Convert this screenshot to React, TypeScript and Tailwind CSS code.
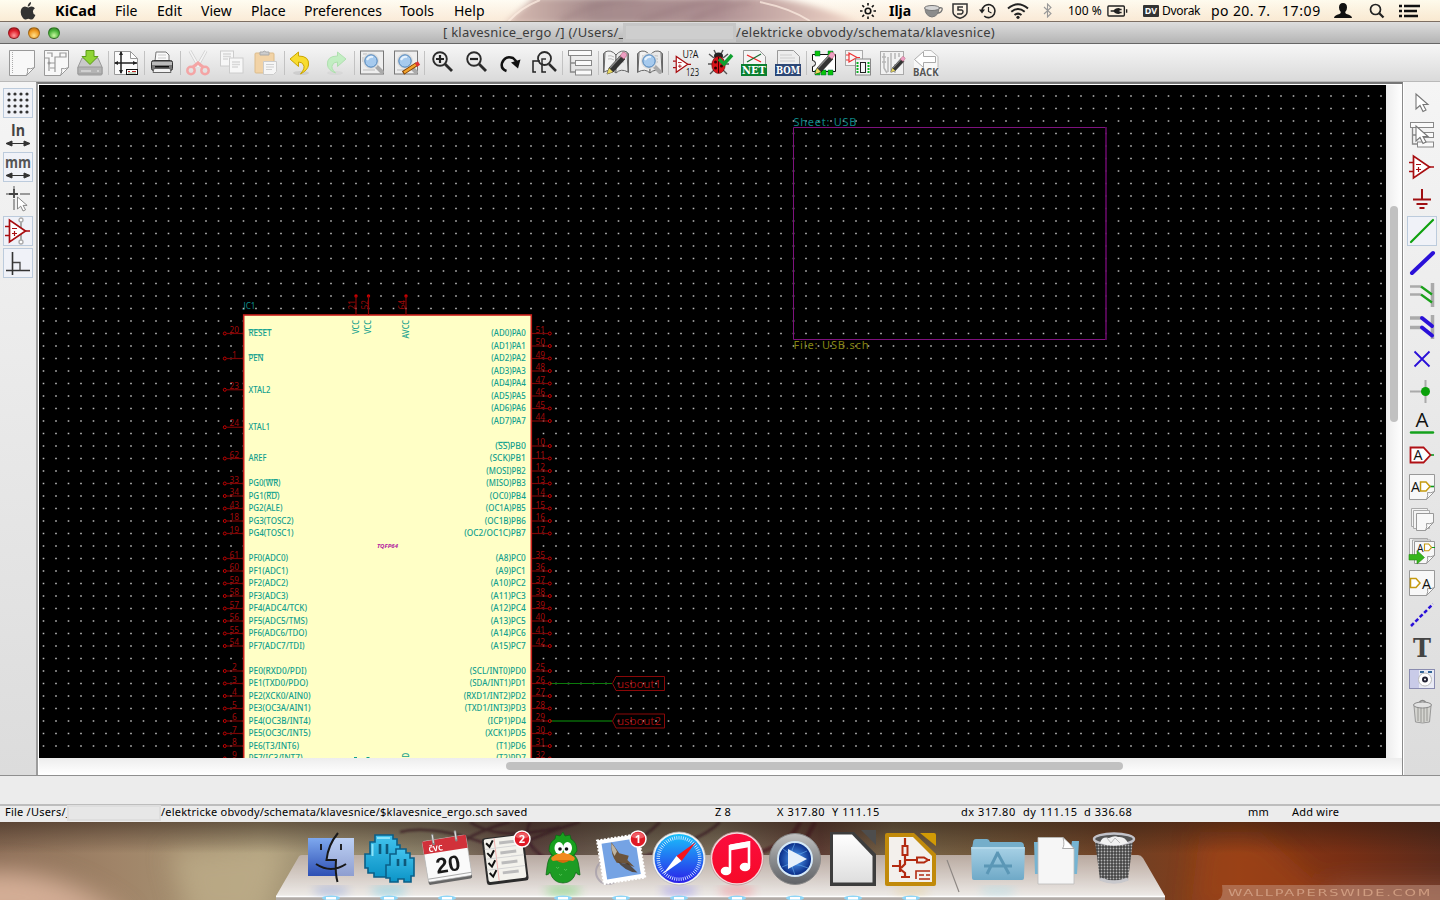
import React from "react";

type P = { children?: React.ReactNode };

const Ico = ({ children, s = 26 }: P & { s?: number }) => (
  <svg width={s} height={s} viewBox="0 0 26 26" fill="none" className="block shrink-0 overflow-visible">
    {children}
  </svg>
);

/* ---------- shared icon pieces ---------- */
const Page = ({ x = 0, y = 0, w = 25, h = 25, o = 1 }: { x?: number; y?: number; w?: number; h?: number; o?: number }) => (
  <g opacity={o}>
    <path d={`M${x + 0.5} ${y + 0.5}h${w}v${h - 8}l-8 8h${-(w - 8)}z`} fill="#f8f8f8" stroke="#999" />
    <path d={`M${x + w + 0.5} ${y + h - 7.5}q-4 2 -7 1q1 3 -1 7z`} fill="#fff" stroke="#999" />
  </g>
);
const Pencil = () => (
  <g>
    <path d="M4 24l2-6 12-13 4 4-12 13z" fill="#333" stroke="#111" strokeWidth=".6" />
    <path d="M7 18L18 6" stroke="#888" strokeWidth="1.4" />
    <path d="M4 24l2-6 4 4z" fill="#e8d860" />
    <path d="M17 6l3-4q3 0 4 3l-3 4z" fill="#ee9fc4" stroke="#a56" strokeWidth=".5" />
  </g>
);
const Glass = () => (
  <g>
    <path d="M17 16l6 6" stroke="#aaa" strokeWidth="4" strokeLinecap="round" />
    <circle cx="12" cy="11" r="7" fill="#a9cdf0" stroke="#ddd" strokeWidth="2" />
    <circle cx="12" cy="11" r="6.2" fill="#a6caee" stroke="#4c82b8" />
    <path d="M8 10q2-4 6-3" stroke="#e6f2fd" strokeWidth="2" />
  </g>
);
const Book = () => (
  <g stroke="#666" strokeWidth="1">
    <path d="M0.500 3.500l2-1v17l-2 3zM25.500 3.500l-2-1v17l2 3z" fill="#ddd" />
    <path d="M2 2q6-3 11 3v18q-5-5-12-1z" fill="#f2f2f2" />
    <path d="M24 2q-6-3-11 3v18q5-5 12-1z" fill="#e9e9e9" />
    <path d="M5 6q3-1 6 1M5 9q3-1 6 1M15 7q3-2 6-1M15 10q3-2 6-1M15 13q3-2 6-1" stroke="#bbb" />
  </g>
);
const OpAmp = () => (
  <g stroke="#a80d10" strokeWidth="1.700">
    <path d="M4.500 2v22l16-11z" fill="#fff" />
    <path d="M0 8.500h4M0 17.500h4M20 13h5" />
    <path d="M7 10.500h5M7 15.500h5M9.500 13v5" strokeWidth="1.200" />
  </g>
);
const Cursor = ({ x = 0, y = 0 }) => (
  <path transform={`translate(${x} ${y})`} d="M0 0v15l4-3.500 3 6 3-1.500-3-5.500h5z" fill="#fff" stroke="#777" strokeWidth="1.100" />
);
const Tree = () => (
  <g stroke="#888" fill="#fafafa">
    <path d="M3.500 5v17h6M3.500 13h6" strokeWidth="1.300" fill="none" />
    <rect x="1.500" y="0.500" width="23" height="5" />
    <rect x="8.500" y="10.500" width="16" height="5" />
    <rect x="8.500" y="20" width="16" height="5" />
  </g>
);
const T = ({ x, y, s, f = "#111", b = false, children, l, serif = false }: P & { x: number; y: number; s: number; f?: string; b?: boolean; l?: number; serif?: boolean }) => (
  <text x={x} y={y} fontSize={s} fill={f} fontWeight={b ? 700 : 400} textLength={l} lengthAdjust="spacingAndGlyphs" fontFamily={serif ? "DejaVu Serif, serif" : "Open Sans, sans-serif"}>
    {children}
  </text>
);

/* ---------- top toolbar ---------- */
const topGroups: React.ReactNode[][] = [
  [
    <Ico><Page /><path d="M3.500 2v22" stroke="#aaa" strokeDasharray="1 1" /></Ico>,
    <Ico><Page x={1} w={24} /><path d="M1 8h5v5h6v-6h5M4 3h5v4M12 13v9M7 18h5M17 3h6v4h-6zM6 13v8" stroke="#999" strokeWidth="1.200" /><circle cx="6" cy="13" r="1.500" fill="#999" /></Ico>,
    <Ico>
      <path d="M5 8h16l4 9v7q0 1-1 1H2q-1 0-1-1v-7z" fill="#c9c9c9" stroke="#999" />
      <path d="M1 17h24v7H1z" fill="#b4b4b4" stroke="#999" /><path d="M4 21h10M20 21h2" stroke="#eee" />
      <path d="M9 0.500h8v6h4l-8 8-8-8h4z" fill="#8fd435" stroke="#5a9a17" />
    </Ico>,
  ],
  [
    <Ico>
      <path d="M1.500 1.500h16l7 7v16h-23z" fill="#fbfbfb" stroke="#999" /><path d="M17.500 1.500v7h7z" fill="#fff" stroke="#999" />
      <path d="M8 2v21M2 13h22" stroke="#222" strokeWidth="1.500" />
      <path d="M8 1l-2 4h4zM8 24l-2-4h4zM1 13l4-2v4zM24 13l-4-2v4z" fill="#222" />
      <rect x="13.500" y="19.500" width="11" height="5" fill="#fff" stroke="#111" /><path d="M15 21.500h2M19 21.500h4" stroke="#b22" /><path d="M15 23h8" stroke="#585" strokeWidth=".7" />
    </Ico>,
  ],
  [
    <Ico>
      <path d="M6 11l1-9h10l3 3v6" fill="#fafafa" stroke="#777" /><path d="M9 5h8M9 8h8" stroke="#ccc" />
      <rect x="2.500" y="10.500" width="21" height="10" rx="2" fill="#777" stroke="#333" /><path d="M3 12h20v3H3z" fill="#bbb" /><path d="M6 16h14v1.500H6z" fill="#111" />
      <path d="M5 18.500h16l1 4H4z" fill="#f2f2f2" stroke="#666" />
    </Ico>,
  ],
  [
    <Ico>
      <path d="M5 1l9 16M21 1l-9 16" stroke="#ccc" strokeWidth="3" /><path d="M5 1l9 16M21 1l-9 16" stroke="#f4f4f4" strokeWidth="1.600" />
      <circle cx="6" cy="20.500" r="3.700" stroke="#f4a5a5" strokeWidth="2.500" /><circle cx="20" cy="20.500" r="3.700" stroke="#f4a5a5" strokeWidth="2.500" /><path d="M8 17l5-4 5 4" stroke="#f4a5a5" strokeWidth="3" />
    </Ico>,
    <Ico>
      <g stroke="#ccc" fill="#f7f7f7"><rect x="1.500" y="1" width="13" height="15" /><rect x="10.500" y="8" width="13.500" height="15" /></g>
      <path d="M4 4h8M4 6.500h8M4 9h5M13 12h8M13 14.500h8M13 17h6" stroke="#d8d8d8" strokeWidth="1.400" />
    </Ico>,
    <Ico>
      <rect x="2" y="3" width="19" height="20" rx="1" fill="#f2d3a6" stroke="#dcbc8b" /><path d="M7 5V2h3q1-2 3 0h3v3z" fill="#ccc" stroke="#aaa" />
      <path d="M10.500 11.500h13v10l-3 3h-10z" fill="#f6f6f6" stroke="#ccc" /><path d="M13 14.500h8M13 17h8M13 19.500h6" stroke="#d0d0d0" />
    </Ico>,
  ],
  [
    <Ico><ellipse cx="12" cy="23" rx="8" ry="2" fill="#bbb" opacity=".5" /><path d="M1 9l8.500-7v4q11 0 10 9-.5 5-8 9 5-6 3-9-1-3-5-3v4.500z" fill="#f8dc2f" stroke="#caa500" /></Ico>,
    <Ico><g opacity=".8"><ellipse cx="12" cy="23" rx="8" ry="2" fill="#ccc" opacity=".5" /><path d="M23 9l-8.500-7v4q-11 0-10 9 .5 5 8 8-5-5-3-8 1-3 5-3v4.500z" fill="#b9efb9" stroke="#a0dda0" /></g></Ico>,
  ],
  [
    <Ico><rect x="1.500" y="1" width="23" height="23" fill="#eee" stroke="#777" /><path d="M4 4h4M4 20h12M4 7v5" stroke="#bbb" /><Glass /></Ico>,
    <Ico><rect x="1.500" y="1" width="23" height="23" fill="#eee" stroke="#777" /><path d="M4 20h12" stroke="#bbb" /><Glass /><path d="M10 23l14-9" stroke="#7c3d00" strokeWidth="4" /><path d="M11 22.500l12-8" stroke="#f2a32c" strokeWidth="2.500" /><path d="M23 15l3-2" stroke="#d33" strokeWidth="4" /></Ico>,
  ],
  [
    <Ico><circle cx="11" cy="9" r="6.800" stroke="#2b2b2b" strokeWidth="1.900" /><path d="M16 14l7 7" stroke="#2b2b2b" strokeWidth="2.800" /><path d="M7 9h8M11 5v8" stroke="#222" strokeWidth="2.200" /></Ico>,
    <Ico><circle cx="11" cy="9" r="6.800" stroke="#2b2b2b" strokeWidth="1.900" /><path d="M16 14l7 7" stroke="#2b2b2b" strokeWidth="2.800" /><path d="M7 9h8" stroke="#222" strokeWidth="2.200" /></Ico>,
    <Ico><path d="M9.500 21q-6-2-4.500-8 3-8 11-5 3 2 4 6" stroke="#111" strokeWidth="2.500" /><path d="M14 12.500l9.500-3-2.500 9z" fill="#111" /></Ico>,
    <Ico><path d="M5 22H2V11h7M11 13v9h4" stroke="#222" strokeWidth="1.500" /><circle cx="13.500" cy="8.500" r="6.500" stroke="#2b2b2b" strokeWidth="1.800" /><path d="M18 14l7 7" stroke="#2b2b2b" strokeWidth="2.500" /><path d="M11 14V9h4" stroke="#333" strokeWidth="1.500" /></Ico>,
  ],
  [<Ico><Tree /></Ico>],
  [<Ico><Book /><Pencil /></Ico>, <Ico><Book /><Glass /></Ico>],
  [
    <Ico><g transform="translate(0 5) scale(.72)"><OpAmp /></g><T x={9.500} y={8} s={10} l={16}>U?A</T><T x={13} y={25.500} s={10} l={13}>123</T></Ico>,
    <Ico>
      <path d="M7 8L2 4M6 14H1M8 19l-5 5M16 8l5-4M17 14h5M16 20l4 4M9 4L7 0M14 4l2-4" stroke="#555" strokeWidth="1.400" />
      <ellipse cx="11.500" cy="6" rx="4.500" ry="3.500" fill="#222" /><ellipse cx="11.500" cy="15" rx="6.700" ry="8.500" fill="#d9141b" stroke="#600" strokeWidth=".6" />
      <path d="M11.500 7v16" stroke="#400" /><g fill="#300"><circle cx="8.500" cy="12" r="1.500" /><circle cx="14.500" cy="16" r="1.500" /><circle cx="8.500" cy="18" r="1.500" /></g>
      <path d="M12 9l5 5 8-9" stroke="#10a030" strokeWidth="3.500" />
    </Ico>,
    <Ico><path d="M2.500.5h16l6 6v18h-22z" fill="#f4f4f4" stroke="#999" /><path d="M6 5l14 7" stroke="#e22" strokeWidth="1.300" /><path d="M6 12l14-8" stroke="#196b30" strokeWidth="1.300" /><rect x="0" y="14" width="26" height="12" fill="#0a8030" /><T x={1} y={24} s={11.500} f="#fff" b l={24} serif>NET</T></Ico>,
    <Ico><path d="M2.500.5h16l6 6v18h-22z" fill="#eee" stroke="#999" /><path d="M5 5h12M5 8h15M5 11h15" stroke="#ccc" /><rect x="0" y="14" width="26" height="12" fill="#2c4775" /><T x={1} y={24} s={11.500} f="#fff" b l={24} serif>BOM</T></Ico>,
  ],
  [
    <Ico><path d="M1.500 4.500h23v17h-23v-5a3 3 0 0 0 0-6z" fill="#fff" stroke="#111" /><path d="M4 1h5v5H4zM17 1h5v5h-5zM4 20h5v5H4zM10 20h5v5h-5zM17 20h5v5h-5z" fill="#09c509" stroke="#064" strokeWidth=".5" /><Pencil /></Ico>,
    <Ico><rect x=".5" y=".5" width="17" height="15" fill="#f5f5f5" stroke="#aaa" /><path d="M4 3v9l8-4.500zM1 5h3M1 10h3M12 7.500h3" stroke="#e33" strokeWidth="1.200" /><rect x="10.500" y="9" width="15" height="16" fill="#f5f5f5" stroke="#888" /><rect x="15.500" y="12.500" width="5" height="10" stroke="#222" /><path d="M12.500 12v11M23.500 12v11" stroke="#09b322" strokeWidth="2" strokeDasharray="2 1" /></Ico>,
    <Ico><rect x="1.500" y="1.500" width="23" height="23" fill="#f2f2f2" stroke="#aaa" /><path d="M5 3v15l3 5M9 7v15M12 3v19M16 3v6M16 14v9M20 3v4M3 7h4M3 12h4" stroke="#b6b6b6" strokeWidth="1.500" /><g transform="translate(9 5) scale(.72)"><Pencil /></g></Ico>,
    <Ico><path d="M1 10l10-9h8l6 5v19H1z" fill="#fff" opacity=".7" /><path d="M1.500 9.500l9-8v5h12v6h-12v5z" fill="#fff" stroke="#aaa" /><path d="M11 .5h7l7 6v11" stroke="#bbb" /><T x={0} y={25.500} s={11} f="#555" b l={25.500}>BACK</T></Ico>,
  ],
];

/* ---------- side toolbars ---------- */
const ArrowsH = () => <path d="M3 21.500h20M1 21.500l6-2.500v5zM25 21.500l-6-2.500v5z" stroke="#333" strokeWidth="1" fill="#333" />;
const leftIcons: [boolean, React.ReactNode][] = [
  [true, <Ico><g fill="#333">{[4, 10, 16, 22].map((y) => [4, 10, 16, 22].map((x) => <circle key={`${x}-${y}`} cx={x} cy={y} r="1.600" />))}</g></Ico>],
  [false, <Ico><T x={6} y={14} s={16.500} f="#444" b l={14}>In</T><ArrowsH /></Ico>],
  [true, <Ico><T x={0} y={14} s={16.500} f="#555" b l={26}>mm</T><ArrowsH /></Ico>],
  [false, <Ico><path d="M9 0v4M1 8h3M15 8h10M9 13v11" stroke="#999" strokeWidth="1.800" /><path d="M9 3v9M4 8h9" stroke="#444" strokeWidth="1.800" /><g transform="translate(12.500 11) scale(.8)"><Cursor /></g></Ico>],
  [true, <Ico><path d="M16 2v22" stroke="#aaa" strokeWidth="2" /><OpAmp /><g stroke="#aaa" fill="#fff" strokeWidth="1.300"><circle cx="16" cy="2" r="2" /><circle cx="16" cy="24" r="2" /></g></Ico>],
  [true, <Ico><path d="M7.500 2v23M1 20.500h24" stroke="#333" strokeWidth="1.600" /><path d="M8 12.500h7v8" stroke="#444" strokeWidth="1.300" /></Ico>],
];
const Gold = ({ x, y }: { x: number; y: number }) => <path transform={`translate(${x} ${y})`} d="M0 0h5.500l4 4.500-4 4.500H0z" stroke="#c59a10" strokeWidth="1.500" fill="#fff" />;
const rightIcons: [boolean, React.ReactNode][] = [
  [false, <Ico><Cursor x={7} y={4} /></Ico>],
  [false, <Ico><Tree /><Cursor x={7} y={4} /></Ico>],
  [false, <Ico><OpAmp /></Ico>],
  [false, <Ico><path d="M13 3v10M4 13.500h18M7.500 18h11M10.500 22h5" stroke="#a01012" strokeWidth="2" /></Ico>],
  [true, <Ico><path d="M2 24L24 2" stroke="#0da00d" strokeWidth="2.200" strokeLinecap="round" /></Ico>],
  [false, <Ico><path d="M3 23L24 3" stroke="#2a10d8" strokeWidth="4" strokeLinecap="round" /></Ico>],
  [false, <Ico><path d="M1 4.500h11M1 12.500h11" stroke="#aaa" strokeWidth="2.500" /><path d="M23.500 1v24" stroke="#aaa" strokeWidth="3.500" /><path d="M12 4.500l11 8M12 12.500l11 8" stroke="#1aa01a" strokeWidth="2.200" /></Ico>],
  [false, <Ico><path d="M1 4h11M1 13.500h11" stroke="#aaa" strokeWidth="3.500" /><path d="M23.500 1v24" stroke="#aaa" strokeWidth="3.500" /><path d="M13 4l10 8M13 13.500l10 8" stroke="#2a10d8" strokeWidth="4" strokeLinecap="round" /></Ico>],
  [false, <Ico><path d="M5.500 5.500l15 15M20.500 5.500l-15 15" stroke="#2a10d8" strokeWidth="1.800" /></Ico>],
  [false, <Ico><path d="M1 13.500h16M16.500 2v23" stroke="#aaa" strokeWidth="2" /><circle cx="16.500" cy="13.500" r="4.500" fill="#0aa00a" /></Ico>],
  [false, <Ico><T x={6.500} y={16.500} s={20} l={13}>A</T><path d="M2 22.500h22" stroke="#14a11c" strokeWidth="2.400" strokeLinecap="round" /></Ico>],
  [false, <Ico><path d="M19 13h6" stroke="#0a9a20" strokeWidth="1.600" /><path d="M1.500 5.500h13l7 7.500-7 7.500h-13z" fill="#fff" stroke="#b01015" strokeWidth="1.800" /><T x={4.500} y={18} s={14} l={9}>A</T></Ico>],
  [false, <Ico><Page x={0} y={0} w={25} h={25} /><path d="M20 12.500h5" stroke="#0a9a20" strokeWidth="1.600" /><T x={2} y={18} s={15} l={9}>A</T><Gold x={11.500} y={8} /></Ico>],
  [false, <Ico><g stroke="#aaa" fill="#f4f4f4"><path d="M2.500 2.500h16v18h-16z" /><path d="M4.500 4.500h16v18h-16z" /></g><Page x={7} y={7} w={17} h={17} /></Ico>],
  [false, <Ico><g stroke="#aaa" fill="#f4f4f4"><path d="M.5.500h18v18h-18z" /><path d="M3.500 2h18v18h-18z" /></g><Page x={5} y={3} w={20} h={22} /><T x={8} y={13.500} s={11} l={6.500}>A</T><g transform="translate(15.500 6) scale(.75)"><Gold x={0} y={0} /></g><path d="M23 9.500h3" stroke="#0a9a20" /><path d="M0 16.500h8v-4l7.500 7-7.500 6.500v-4H0z" fill="#35b51c" stroke="#268a10" strokeWidth=".6" /></Ico>],
  [false, <Ico><Page x={0} y={0} w={25} h={25} /><Gold x={1.500} y={8.500} /><T x={13} y={18.500} s={15} l={9}>A</T></Ico>],
  [false, <Ico><path d="M2 24L24 2" stroke="#2a10d8" strokeWidth="2.500" strokeDasharray="4 2.200" strokeLinecap="butt" /></Ico>],
  [false, <Ico><T x={4} y={23} s={26} f="#444" b l={18} serif>T</T></Ico>],
  [false, <Ico><rect x=".5" y="3.500" width="25" height="19" fill="#c9cbe8" stroke="#8a8cb0" /><path d="M10 4h15v18H10z" fill="#e9ebf5" /><path d="M11 6h4M19 6h4" stroke="#369" strokeWidth="2" /><circle cx="16" cy="13.500" r="6.500" fill="#fff" stroke="#bbb" /><circle cx="16" cy="13.500" r="3" fill="#223" /><circle cx="16" cy="13.500" r="1" fill="#fff" /></Ico>],
  [false, <Ico><path d="M5 8h17l-1.500 16q-7 2-14 0z" fill="#d4d4d0" stroke="#999" /><path d="M9 10v13M12 10v14M15 10v14M18 10v13" stroke="#a5a5a0" strokeWidth="1.300" /><ellipse cx="13.500" cy="7" rx="9" ry="3" fill="#e2e2e2" stroke="#888" /><path d="M10.500 4q3-3 6 0" stroke="#888" strokeWidth="1.500" /></Ico>],
];

const Side = ({ items, cls }: { items: [boolean, React.ReactNode][]; cls: string }) => (
  <div className={`flex flex-col items-center gap-0.5 bg-gradient-to-b from-[#f5f5f5] to-[#dcdcdc] ${cls}`}>
    {items.map(([on, n], i) => (
      <div key={i} className={`flex h-[30px] w-[30px] shrink-0 items-center justify-center border ${on ? "border-[#bccbdc] bg-[#f0f2f8]" : "border-transparent"}`}>
        {n}
      </div>
    ))}
  </div>
);

/* ---------- schematic ---------- */
type Pin = [number, string, string, number];
const run = (y: number, l: [string, string, number][]): Pin[] => l.map(([n, t, w], i) => [y + i * 12.5, n, t, w]);
const leftPins: Pin[] = [
  [333.5, "20", "RESET", 23], [358.5, "1", "PEN", 15], [389.75, "23", "XTAL2", 22], [427.25, "24", "XTAL1", 21.5], [458.5, "62", "AREF", 18],
  ...run(483.5, [["33", "PG0(WR)", 32], ["34", "PG1(RD)", 31], ["43", "PG2(ALE)", 34], ["18", "PG3(TOSC2)", 45], ["19", "PG4(TOSC1)", 45]]),
  ...run(558.5, [["61", "PF0(ADC0)", 39.5], ["60", "PF1(ADC1)", 39.5], ["59", "PF2(ADC2)", 39.5], ["58", "PF3(ADC3)", 39.5], ["57", "PF4(ADC4/TCK)", 58.5], ["56", "PF5(ADC5/TMS)", 59], ["55", "PF6(ADC6/TDO)", 58.5], ["54", "PF7(ADC7/TDI)", 56]]),
  ...run(671, [["2", "PE0(RXD0/PDI)", 58], ["3", "PE1(TXD0/PDO)", 59.5], ["4", "PE2(XCK0/AIN0)", 62], ["5", "PE3(OC3A/AIN1)", 62], ["6", "PE4(OC3B/INT4)", 62], ["7", "PE5(OC3C/INT5)", 62], ["8", "PE6(T3/INT6)", 50.5], ["9", "PE7(IC3/INT7)", 54]]),
];
const rightPins: Pin[] = [
  ...run(333.5, [["51", "(AD0)PA0", 34.5], ["50", "(AD1)PA1", 34.5], ["49", "(AD2)PA2", 34.5], ["48", "(AD3)PA3", 34.5], ["47", "(AD4)PA4", 34.5], ["46", "(AD5)PA5", 34.5], ["45", "(AD6)PA6", 34.5], ["44", "(AD7)PA7", 34.5]]),
  ...run(446, [["10", "(SS)PB0", 30.5], ["11", "(SCK)PB1", 36], ["12", "(MOSI)PB2", 39.5], ["13", "(MISO)PB3", 39.5], ["14", "(OC0)PB4", 36], ["15", "(OC1A)PB5", 40], ["16", "(OC1B)PB6", 41], ["17", "(OC2/OC1C)PB7", 61.5]]),
  ...run(558.5, [["35", "(A8)PC0", 30], ["36", "(A9)PC1", 30], ["37", "(A10)PC2", 35], ["38", "(A11)PC3", 35], ["39", "(A12)PC4", 35], ["40", "(A13)PC5", 35], ["41", "(A14)PC6", 35], ["42", "(A15)PC7", 35]]),
  ...run(671, [["25", "(SCL/INT0)PD0", 56], ["26", "(SDA/INT1)PD1", 56], ["27", "(RXD1/INT2)PD2", 62], ["28", "(TXD1/INT3)PD3", 61], ["29", "(ICP1)PD4", 38], ["30", "(XCK1)PD5", 40.5], ["31", "(T1)PD6", 29.5], ["32", "(T2)PD7", 29.5]]),
];
const topPins: [number, string, string, number][] = [[356, "21", "VCC", 14], [368.5, "52", "VCC", 14], [406, "64", "AVCC", 18.5]];

const Schematic = () => (
  <svg width="1347" height="673" viewBox="39 85 1347 673" fill="none" fontFamily="Noto Sans, sans-serif" className="block bg-black">
    <g stroke="#bcbcbc" strokeWidth="1.600" strokeDasharray="1.600 10.900">
      {Array.from({ length: 53 }, (_, i) => (
        <path key={i} d={`M42.700 ${96 + i * 12.5}H1386`} />
      ))}
    </g>
    <g stroke="#7e127e">
      <path d="M1106 127.500H793.500V339.500H1106" />
      <path d="M1106 127v213" stroke="#5a085a" strokeWidth="1.800" />
    </g>
    <text x="793.500" y="126" fontSize="11" fill="#0f8787" textLength="63" fontFamily="Noto Sans, sans-serif" lengthAdjust="spacing">Sheet: USB</text>
    <text x="793.500" y="348.800" fontSize="11" fill="#858512" textLength="75" fontFamily="Noto Sans, sans-serif" lengthAdjust="spacing">File: USB.sch</text>

    <path d="M550 683.500h62" stroke="#0b7a0b" />
    <path d="M550 721h62" stroke="#064d06" strokeWidth="1.800" />
    {[683.5, 721].map((y, i) => (
      <g key={y}>
        <path d={`M612.500 ${y}l3.500-7h48.500v14H616z`} stroke="#8a0808" />
        <text x="617" y={y + 4} fontSize="11.500" fill="#9a0c0c" textLength="44" lengthAdjust="spacing" fontFamily="Noto Sans, sans-serif">{`usbout${i + 1}`}</text>
      </g>
    ))}

    <rect x="243.700" y="315" width="287.600" height="460" fill="#ffffc6" stroke="#c8201c" strokeWidth="1.600" />
    <text x="243.500" y="308.500" fontSize="8" fill="#0c8c8c" textLength="12" lengthAdjust="spacingAndGlyphs">JC1</text>
    <text x="377" y="548.300" fontSize="6" fill="#b31ba0" fontWeight="700" fontStyle="italic" textLength="21" lengthAdjust="spacingAndGlyphs">TQFP64</text>

    {leftPins.map(([y, n, t, w]) => (
      <g key={n}>
        <circle cx="224.800" cy={y} r="1.500" stroke="#c00" />
        <path d={`M226.500 ${y}H243`} stroke="#7c0505" strokeWidth="1.200" />
        <text x="234.300" y={y - 0.8} fontSize="8.300" fill="#a00a0a" textAnchor="middle">{n}</text>
        <text x="248.500" y={y + 2.9} fontSize="8.200" fontWeight="500" fill="#12a08e" textLength={w} lengthAdjust="spacingAndGlyphs">{t}</text>
      </g>
    ))}
    {rightPins.map(([y, n, t, w]) => (
      <g key={n}>
        <circle cx="549.800" cy={y} r="1.500" stroke="#c00" />
        <path d={`M532 ${y}H548`} stroke="#7c0505" strokeWidth="1.200" />
        <text x="540.300" y={y - 0.8} fontSize="8.300" fill="#a00a0a" textAnchor="middle">{n}</text>
        <text x={525.8 - w} y={y + 2.9} fontSize="8.200" fontWeight="500" fill="#12a08e" textLength={w} lengthAdjust="spacingAndGlyphs">{t}</text>
      </g>
    ))}
    <path d="M248.500 329.800h23M248.500 354.800h15M266.500 479.800h11.500M266.500 492.300h11.500M498 442.300h11" stroke="#12a08e" strokeWidth=".9" />
    {topPins.map(([x, n, t, w]) => (
      <g key={n}>
        <circle cx={x} cy="296" r="1.700" fill="#c00" />
        <path d={`M${x} 296v19`} stroke="#8c0505" strokeWidth="1.200" />
        <text transform={`translate(${x - 1} 309.500) rotate(-90)`} fontSize="8.300" fill="#a00a0a">{n}</text>
        <text transform={`translate(${x + 2.9} ${320 + w}) rotate(-90)`} fontSize="8.200" fontWeight="500" fill="#12a08e" textLength={w} lengthAdjust="spacingAndGlyphs">{t}</text>
      </g>
    ))}
    <text transform="translate(408.700 771) rotate(-90)" fontSize="8.200" fontWeight="500" fill="#12a08e" textLength="18" lengthAdjust="spacingAndGlyphs">AGND</text>
    <path d="M354 757.500h3M366.500 757.500h3" stroke="#12a08e" />
  </svg>
);

/* ---------- menu bar ---------- */
const menus: [string, string][] = [
  ["File", "w-[42px]"], ["Edit", "w-[44px]"], ["View", "w-[50px]"], ["Place", "w-[53px]"], ["Preferences", "w-[96px]"], ["Tools", "w-[54px]"], ["Help", "w-[40px]"],
];

const MenuBar = () => (
  <div className="relative h-[22px] w-full overflow-hidden border-b border-[#7d6f63] bg-gradient-to-r from-[#fffbe0] via-[#fff8ea] to-[#fdf6d8]">
    <svg className="absolute inset-0" width="1440" height="21" viewBox="0 0 1440 21">
      <defs>
        <filter id="soft"><feGaussianBlur stdDeviation="3" /></filter>
        <linearGradient id="hair" x1="0" x2="1"><stop offset="0" stopColor="#d9bdb3" /><stop offset=".25" stopColor="#a58b8c" /><stop offset=".6" stopColor="#ad8f92" /><stop offset="1" stopColor="#f1d6c8" /></linearGradient>
        <linearGradient id="shade" x1="0" x2="0" y1="0" y2="1"><stop offset="0" stopColor="#fff" stopOpacity=".5" /><stop offset="1" stopColor="#f4d9c8" stopOpacity=".45" /></linearGradient>
      </defs>
      <rect width="1440" height="21" fill="url(#shade)" />
      <path d="M505 24L535-3H770Q820 5 860 24z" fill="url(#hair)" filter="url(#soft)" />
      <path d="M560 22Q590 2 640-2M640 22Q680 5 730-2M690 22Q710 8 750 2" stroke="#7b5a60" strokeWidth="2" fill="none" opacity=".5" filter="url(#soft)" />
      <path d="M508 22Q520 8 540 0M760 2Q790 8 810 21" stroke="#fff0e4" strokeWidth="2" fill="none" opacity=".7" />
    </svg>
    <div className="relative flex h-[21px] items-center whitespace-nowrap pl-[20px] font-['Noto_Sans',sans-serif] text-[14px] text-black">
      <svg width="16" height="18" viewBox="0 0 16 18" className="mr-[19px] block">
        <path d="M11 0q.3 2-1 3.300Q9 4.600 7.700 4.500 7.600 2.800 8.800 1.500 9.700.4 11 0zM14.900 6.200q-2 1.300-2 3.300 0 2.600 2.500 3.600-.6 1.700-1.600 3-1 1.500-2.300 1.500-.7 0-1.500-.4-.9-.4-1.700-.4t-1.700.4q-.8.4-1.400.4-1.400 0-2.800-2.300Q.7 12.700.7 9.900q0-2.400 1.200-3.800 1.200-1.500 3-1.500.8 0 1.800.4 1 .4 1.400.4.400 0 1.400-.5 1.100-.4 2-.4 2.200 0 3.400 1.700z" fill="#333" />
      </svg>
      <span className="w-[60px] text-[14.500px] font-bold">KiCad</span>
      {menus.map(([m, w]) => <span key={m} className={w}>{m}</span>)}
    </div>
    <div className="absolute inset-y-0 right-0 flex h-[21px] w-[582px] items-center whitespace-nowrap font-['Noto_Sans',sans-serif] text-[14px] text-black">
      <div className="w-[31px] pl-[2px]">
        <svg width="16" height="16" viewBox="0 0 16 16" stroke="#111" strokeWidth="1.600" fill="none"><circle cx="8" cy="8" r="2.800" /><path d="M8 0v2.500M8 13.500V16M0 8h2.500M13.500 8H16M2.300 2.300l1.800 1.800M11.900 11.900l1.800 1.800M13.700 2.300l-1.800 1.800M4.100 11.900l-1.800 1.800" /></svg>
      </div>
      <span className="w-[35px] font-bold">Ilja</span>
      <div className="w-[27px]"><svg width="19" height="14" viewBox="0 0 19 14"><path d="M1 4q0 8 7 9 7-1 7-9z" fill="#8c8c8c" stroke="#777" /><ellipse cx="8" cy="4" rx="7.500" ry="2.500" fill="#d5d5d5" stroke="#777" /><path d="M15 4q4-1 3 2-1 3-4 3" stroke="#777" fill="none" strokeWidth="1.300" /></svg></div>
      <div className="w-[28px] pl-px"><svg width="16" height="16" viewBox="0 0 16 16" fill="none" stroke="#333" strokeWidth="1.500"><path d="M1 1h14v8q0 4-7 6.300Q1 13 1 9z" /><path d="M11 4H6v3h3.500q1.500.2 1.500 1.800T9.300 11H5" /></svg></div>
      <div className="w-[28px]"><svg width="18" height="16" viewBox="0 0 18 16" fill="none" stroke="#222" strokeWidth="1.600"><path d="M3 8a6.500 6.500 0 1 1 2.200 5" /><path d="M0 6.500h6L3 10.500z" fill="#222" stroke="none" /><path d="M9.500 4v4.500l3 1.500" strokeWidth="1.200" /></svg></div>
      <div className="w-[36px]"><svg width="22" height="16" viewBox="0 0 22 16" fill="none" stroke="#222" strokeWidth="2"><path d="M1 5.500q10-8.500 20 0M4.300 8.800q6.700-5.500 13.400 0M7.500 12q3.500-2.800 7 0" /><circle cx="11" cy="14.300" r="1.600" fill="#222" stroke="none" /></svg></div>
      <div className="w-[25px]"><svg width="9" height="15" viewBox="0 0 9 15" fill="none" stroke="#999" strokeWidth="1.100"><path d="M1 4l7 6.500-3.500 3.500V1L8 4.500 1 11" /></svg></div>
      <span className="w-[39px] text-[12px]">100 %</span>
      <div className="w-[36px]"><svg width="21" height="12" viewBox="0 0 23 13" fill="none" stroke="#222" strokeWidth="1.500"><path d="M6 1H2Q1 1 1 2v9q0 1 1 1h4M14 1h4q1 0 1 1v9q0 1-1 1h-4M5 1h10M5 12h10M21.500 4.500v4" /><path d="M4 6.500h4M13 4.800h3M13 8.200h3" /><path d="M8 6.500q1-2.500 5-2.500v5q-4 0-5-2.500z" fill="#222" /></svg></div>
      <div className="mr-[3px] flex h-[12px] w-[16px] items-center justify-center rounded-[1px] bg-[#333] text-[9px] font-bold leading-none text-white">DV</div>
      <span className="w-[49px] text-[12px] tracking-[-0.300px]">Dvorak</span>
      <span className="w-[71px] tracking-[0.400px]">po 20. 7.</span>
      <span className="w-[52px] tracking-[0.600px]">17:09</span>
      <div className="w-[35px]"><svg width="18" height="16" viewBox="0 0 18 16" fill="#111"><path d="M9 0q4 0 4 4.500 0 3-1.800 4.600 0 1.500 1.300 2Q18 12.500 18 15H0q0-2.500 5.500-3.900 1.300-.5 1.300-2Q5 7.500 5 4.500 5 0 9 0z" /></svg></div>
      <div className="w-[30px]"><svg width="16" height="16" viewBox="0 0 16 16" fill="none" stroke="#222"><circle cx="6.500" cy="6.500" r="5" strokeWidth="1.700" /><path d="M10 10l4.500 4.500" strokeWidth="2.300" /></svg></div>
      <svg width="21" height="14" viewBox="0 0 21 14" stroke="#111" strokeWidth="2.600"><path d="M0 2h3M5 2h16M0 7h3M5 7h13M0 12h3M5 12h14" /></svg>
    </div>
  </div>
);

/* ---------- dock ---------- */
const D = ({ children }: P) => <svg width="58" height="58" viewBox="0 0 58 58" fill="none" className="block shrink-0 overflow-visible">{children}</svg>;
const Badge = ({ n }: { n: string }) => (
  <g><circle cx="46" cy="10" r="8" fill="#e01a26" stroke="#fff" strokeWidth="1.500" /><path d="M39.500 8a7 7 0 0 1 13 0q-6 3-13 0z" fill="#f4787e" opacity=".7" /><text x="46" y="14" fontSize="11" fill="#fff" textAnchor="middle" fontWeight="700" fontFamily="Open Sans, sans-serif">{n}</text></g>
);
const ticks = Array.from({ length: 60 }, (_, i) => i * 6);
const dockApps: React.ReactNode[] = [
  <D>
    <defs><linearGradient id="fa" x2="0" y2="1"><stop stopColor="#7ea8ee" /><stop offset="1" stopColor="#2e50b4" /></linearGradient><linearGradient id="fb" x2="0" y2="1"><stop stopColor="#bcd0f4" /><stop offset="1" stopColor="#8e9ed0" /></linearGradient></defs>
    <rect x="6" y="9" width="46" height="38" fill="url(#fb)" /><path d="M6 9h26q-7 12-7 22h9v16H6z" fill="url(#fa)" />
    <path d="M19 15v6M39 15v6" stroke="#111" strokeWidth="1.800" /><path d="M36 4q-10 12-11.500 27H34q-1 13 1.500 22M14 35q15 10 30 0" stroke="#181818" strokeWidth="2" />
  </D>,
  <D>
    <defs><linearGradient id="gh" x2="0" y2="1"><stop stopColor="#43c4ee" /><stop offset="1" stopColor="#0b93c6" /></linearGradient></defs>
    <g stroke="#0b5f88" strokeWidth="1.600" fill="url(#gh)"><path d="M15 6h18v4h4v6h3v12h3v15h-4v4h-5v-3h-6v4H14v-4H8v-5H5V25h5V13h5z" /><path d="M36 20h10v4h4v5h4v18h-3v6h-7v-3h-6v3h-8v-4h-4V36h4V25h6z" /></g>
    <path d="M20 15v10M27 15v10M38 30v7M45 30v7" stroke="#0e587a" strokeWidth="2.600" /><path d="M17 9h13M12.500 15v12" stroke="#8be3fa" strokeWidth="2" />
  </D>,
  <D>
    <g transform="rotate(-9 29 29)"><rect x="7" y="11" width="44" height="42" rx="2" fill="#666" /><rect x="7" y="9" width="44" height="41" rx="2" fill="#fafafa" stroke="#bbb" strokeWidth=".6" /><path d="M7 9h44v13H7z" fill="#d1313a" /><path d="M7 47h44" stroke="#aaa" />
      <text x="12" y="20.500" fontSize="7.500" fill="#fff" fontWeight="700" fontFamily="Open Sans, sans-serif">ČVC</text><text x="29" y="43" fontSize="22" fill="#1a1a1a" fontWeight="700" textAnchor="middle" fontFamily="Liberation Sans, sans-serif">20</text>
      <path d="M18 4v9M41 4v9" stroke="#888" strokeWidth="2.500" strokeLinecap="round" /><path d="M18 4v8M41 4v8" stroke="#e4e4e4" strokeWidth="1" /></g>
  </D>,
  <D>
    <g transform="rotate(-7 29 29)"><rect x="8" y="7" width="42" height="47" rx="3" fill="#2b2b2b" /><rect x="10" y="8" width="38" height="43" rx="2" fill="#f3f2ec" /><path d="M20.500 8v43" stroke="#f2a3a3" strokeWidth=".8" /><path d="M10 18h38M10 28h38M10 39h38" stroke="#d5d5d5" />
      {[12, 22, 32, 42].map((y) => <g key={y}><path d={`M12 ${y}l3 4 4-6`} stroke="#111" strokeWidth="2" /><path d={`M25 ${y + 1.5}h16`} stroke="#bbb" strokeWidth="3" /></g>)}</g>
    <Badge n="2" />
  </D>,
  <D>
    <path d="M20 24q-6 4-7 14l-1 8q3 0 4-3 3 11 13 11t13-11q1 3 4 3l-1-8q-1-10-7-14z" fill="#1d9c24" stroke="#0a6413" strokeWidth=".7" />
    <path d="M29 3l2 4 5-1 1 4q6 3 6 12l-3 4q-10 6-22 0l-3-4q0-9 6-12l1-4 4 1z" fill="#18a01e" stroke="#0a6413" strokeWidth=".7" />
    <path d="M18 28q11-9 22 0 2 2-1 4-10-2-20 0-3-2-1-4z" fill="#f28a1c" /><path d="M22 31q7 6 14 0z" fill="#d66a0c" />
    <ellipse cx="25" cy="19" rx="4.500" ry="6" fill="#fff" /><ellipse cx="33.500" cy="19" rx="4.500" ry="6" fill="#fff" /><circle cx="26" cy="20" r="1.800" fill="#111" /><circle cx="32.500" cy="20" r="1.800" fill="#111" /><path d="M22 38q2 3 3 0M30 40q2 3 3 0M25 45q2 3 3 0" stroke="#4fc04f" />
  </D>,
  <D>
    <circle cx="16" cy="43" r="12" stroke="#9a93a4" strokeWidth="2" opacity=".6" />
    <g transform="rotate(-9 29 29)"><rect x="8" y="8" width="42" height="44" fill="#fff" stroke="#fff" strokeWidth="2" strokeDasharray="2 1.500" /><rect x="12" y="12" width="34" height="36" fill="#75a3e4" />
      <path d="M22 12q4 8 6 12l9 4-2 4 6 8-9-5-8-2q-5-9-2-21z" fill="#6c543b" /><path d="M22 13q3 5 4 9l-3 4q-3-6-1-13z" fill="#bdb4a3" /><path d="M24 30q4 6 11 5l8 11q-12-2-19-16z" fill="#4a3421" opacity=".8" /></g>
    <Badge n="1" />
  </D>,
  <D>
    <defs><linearGradient id="sf" x2="0" y2="1"><stop stopColor="#1ac2fb" /><stop offset="1" stopColor="#2a1fe8" /></linearGradient></defs>
    <circle cx="29" cy="29.500" r="26.500" fill="#f4f4f4" stroke="#b5b5b5" strokeWidth=".8" /><circle cx="29" cy="29.500" r="24.500" fill="url(#sf)" />
    <g stroke="#d8ecff" strokeWidth=".8">{ticks.map((a) => <path key={a} d="M29 7v3.500" transform={`rotate(${a} 29 29.500)`} />)}</g>
    <path d="M46 13L26.500 27l5 5z" fill="#f6141c" /><path d="M13 45l13.500-18 5 5z" fill="#fff" />
  </D>,
  <D>
    <defs><linearGradient id="mu" x2="0" y2="1"><stop stopColor="#fb0d3e" /><stop offset="1" stopColor="#f60a28" /></linearGradient></defs>
    <circle cx="29" cy="29.500" r="26.500" fill="#f6d9dc" stroke="#b99" strokeWidth=".8" /><circle cx="29" cy="29.500" r="24.800" fill="url(#mu)" />
    <path d="M22 41V17l19-3.500V37" stroke="#fff" strokeWidth="2.600" /><path d="M22 15.500L42 12v6l-20 3.500z" fill="#fff" /><ellipse cx="18" cy="42" rx="5.300" ry="4.300" fill="#fff" /><ellipse cx="37" cy="38" rx="5.300" ry="4.300" fill="#fff" />
  </D>,
  <D>
    <defs><linearGradient id="pl" x2="0" y2="1"><stop stopColor="#c2c2c2" /><stop offset=".5" stopColor="#8c8e90" /><stop offset="1" stopColor="#606266" /></linearGradient><radialGradient id="pb"><stop stopColor="#56a8ff" /><stop offset="1" stopColor="#0a2c86" /></radialGradient></defs>
    <circle cx="29" cy="30" r="25.500" fill="url(#pl)" stroke="#888" /><circle cx="29" cy="30" r="18" fill="#d5e9f8" /><circle cx="29" cy="30" r="16" fill="url(#pb)" /><path d="M17 20q10 10 24 2M16 38q10-6 26 1M29 14q-8 14 0 32" stroke="#76c4ff" opacity=".5" /><path d="M22 20v20l19-10z" fill="#e6f0fb" />
  </D>,
  <D>
    <defs><linearGradient id="lo" x2="0" y2="1"><stop stopColor="#fff" /><stop offset="1" stopColor="#dedede" /></linearGradient></defs>
    <path d="M6 3h24l22 22v32H6z" fill="#3d3d3d" /><path d="M9 5.500h19L48.500 27v26.500H9z" fill="url(#lo)" /><path d="M37 1h15v15z" fill="#4d4d4d" />
  </D>,
  <D>
    <path d="M3 6q0-2 2-2h27l22 21v30q0 2-2 2H5q-2 0-2-2z" fill="#c18a0a" /><path d="M7 8h24l19 19v26H7z" fill="#f3f0ec" /><path d="M38 4h14q2 0 2 2v11z" fill="#d19a05" />
    <path d="M23 9v8M23 26v9l-4 4M10 37h8M18 31v12M18 40l5 4v4M19 48h9M23 31h12M46 31h2" stroke="#b32a10" strokeWidth="2.200" /><rect x="20.500" y="17" width="5" height="9" stroke="#b32a10" strokeWidth="2" /><path d="M35 28.500h7l4 2.500-4 2.500h-7z" stroke="#b32a10" strokeWidth="2" /><path d="M34 50v-8h14M37 46h5M44 46h4M37 50h11" stroke="#b32a10" strokeWidth="1.600" />
  </D>,
];
const dockRight: React.ReactNode[] = [
  <D>
    <defs><linearGradient id="fo" x2="0" y2="1"><stop stopColor="#a7d1e6" /><stop offset="1" stopColor="#6fa9c7" /></linearGradient></defs>
    <path d="M4 14q0-4 3-4h11q2 0 3 3h30q4 0 4 4v30H3V19z" fill="#75aeca" /><path d="M2 18h54l-1 31q0 2-2 2H5q-2 0-2-2z" fill="url(#fo)" /><path d="M3 19h52" stroke="#c3e3f1" />
    <path d="M29 23L18 45M28 23l12 22M15 37h28" stroke="#5b97b6" strokeWidth="3" />
  </D>,
  <D>
    <path d="M7 13h7l3-3h8v35H8zM45 12h7l-2 33H40z" fill="#76b4d2" /><path d="M11 8.500h25l11 11V55H11z" fill="#f6f6f6" stroke="#bbb" strokeWidth=".8" /><path d="M36 8.500q2 8-.5 11H47q-5-6-11-11z" fill="#fff" stroke="#999" strokeWidth=".8" />
  </D>,
  <D>
    <defs><pattern id="mesh" width="3" height="3" patternUnits="userSpaceOnUse"><rect width="3" height="3" fill="#444" /><circle cx="1.500" cy="1.500" r=".9" fill="#b5b5b5" /></pattern></defs>
    <path d="M10 12h38l-5 39q-14 6-28 0z" fill="url(#mesh)" /><path d="M15 50q14 6 28 0" stroke="#c8c8cc" strokeWidth="3.500" /><ellipse cx="29" cy="10" rx="20" ry="5.500" fill="#555" stroke="#c3c3c9" strokeWidth="2.500" /><path d="M15 14q2-7 9-5 6-3 9-1 7-1 10 6-14 5-28 0z" fill="#f1f1f1" /><path d="M22 9l4 5 4-5 5 5" stroke="#bbb" />
  </D>,
];

const Desktop = () => (
  <div className="relative h-[78px] w-full overflow-hidden">
    <svg width="1440" height="78" viewBox="0 0 1440 78" className="absolute inset-0" fill="none">
      <defs>
        <linearGradient id="wall" x2="1"><stop stopColor="#8d6f58" /><stop offset=".08" stopColor="#a08468" /><stop offset=".18" stopColor="#aa9a78" /><stop offset=".3" stopColor="#8a8069" /><stop offset=".37" stopColor="#5d4540" /><stop offset=".43" stopColor="#6d6252" /><stop offset=".5" stopColor="#7d705c" /><stop offset=".57" stopColor="#5d3d34" /><stop offset=".62" stopColor="#766549" /><stop offset=".7" stopColor="#715538" /><stop offset=".78" stopColor="#6f4024" /><stop offset=".86" stopColor="#8c3c17" /><stop offset=".93" stopColor="#7a3015" /><stop offset="1" stopColor="#5e2c1c" /></linearGradient>
        <linearGradient id="dark" x2="0" y2="1"><stop stopColor="#281a12" stopOpacity=".5" /><stop offset=".4" stopColor="#281a12" stopOpacity="0" /></linearGradient>
        <linearGradient id="shelf" x2="0" y2="1"><stop stopColor="#bfb1a9" stopOpacity=".92" /><stop offset="1" stopColor="#eeebe8" /></linearGradient>
        <filter id="bl"><feGaussianBlur stdDeviation="5" /></filter><filter id="b2"><feGaussianBlur stdDeviation="1.200" /></filter>
        <filter id="b10" x="-30%" width="160%" y="-60%" height="220%"><feGaussianBlur stdDeviation="12" /></filter>
      </defs>
      <rect width="1440" height="78" fill="url(#wall)" />
      <g filter="url(#b10)"><path d="M-30 50Q60 40 130 100H-30z" fill="#d4ae96" /><path d="M170 30L290 20 260 100H190z" fill="#c0b08c" opacity=".7" /><path d="M1200 10h60l90 80h-160z" fill="#a8471a" opacity=".5" /><path d="M1330 60h140v40h-140z" fill="#9c5a42" opacity=".6" /></g>
      <g filter="url(#b2)" stroke="#3a1628" strokeWidth="2.500" opacity=".7"><path d="M400 10Q440 0 520 35M440 35Q470 10 510 0M470 0Q500 20 560 5M500 36Q520 18 580 0M530 0Q520 20 545 36M660 0Q640 20 600 40M720 0Q700 20 640 35" /><path d="M800 0Q790 25 740 36M815 0Q800 30 790 36" strokeWidth="4" stroke="#4a1220" /></g>
      <rect width="1440" height="78" fill="url(#dark)" />
      <path d="M300 33H1138q3 0 5 3l22 38H276l22-38q1-3 4-3z" fill="url(#shelf)" />
      <path d="M276 74h889v4H276z" fill="#b2aca8" /><path d="M276 74.500h889" stroke="#fff" strokeWidth="1.500" />
      <g filter="url(#bl)" opacity=".45">
        {([[331, "#7f9be0"], [389, "#5cc9e8"], [563, "#4fd04f"], [679, "#7d7af5"], [737, "#f5707c"], [911, "#e8cf90"], [998, "#a8dcea"]] as [number, string][]).map(([x, c]) => <ellipse key={x} cx={x} cy="69" rx="18" ry="5" fill={c} />)}
      </g>
      <path d="M947 38l12 32" stroke="#8d8783" strokeWidth="1.200" />
      {[331, 389, 447, 563, 621, 679, 737, 795, 853, 911].map((x) => <g key={x}><ellipse cx={x} cy="76" rx="9" ry="2.500" fill="#8fd6f7" /><rect x={x - 5} y="75" width="10" height="2.500" fill="#fff" /></g>)}
      <path d="M1222 63h218v15h-222q6-2 4-15z" fill="#c79f8e" opacity=".45" />
      <text x="1228" y="73.500" fontSize="8.500" fill="#cf9c80" textLength="204" lengthAdjust="spacingAndGlyphs" fontFamily="DejaVu Sans, sans-serif" letterSpacing="1">WALLPAPERSWIDE.COM</text>
    </svg>
    <div className="relative flex pl-[302px] pt-[7px]">
      {dockApps.map((n, i) => <React.Fragment key={i}>{n}</React.Fragment>)}
      <div className="w-[29px]" />
      {dockRight.map((n, i) => <React.Fragment key={i}>{n}</React.Fragment>)}
    </div>
  </div>
);

const lights = ["bg-[radial-gradient(circle_at_50%_75%,#ff9a9a,#e0202c_55%,#8c1018)]", "bg-[radial-gradient(circle_at_50%_75%,#ffe08a,#f09a20_55%,#9a5a10)]", "bg-[radial-gradient(circle_at_50%_75%,#c8f8a0,#4db53c_55%,#256b1c)]"];

export default function App() {
  return (
    <div className="flex h-[900px] w-[1440px] flex-col overflow-hidden bg-[#ececec] font-['Noto_Sans',sans-serif]">
      <MenuBar />
      <div className="flex h-[22px] shrink-0 items-center border-b border-[#666] bg-gradient-to-b from-[#dedede] to-[#b4b4b4] text-[13px] text-[#3c3c3c]">
        <div className="flex w-[443px] gap-2 pl-2">
          {lights.map((c) => <div key={c} className={`h-3 w-3 rounded-full border border-black/30 ${c}`} />)}
        </div>
        <span className="w-[180px] overflow-hidden whitespace-nowrap tracking-[0.240px]">[ klavesnice_ergo /] (/Users/_</span>
        <div className="h-[19px] w-[113px] border-[3px] border-[#c6c6c6] bg-[#cecece]" />
        <span className="whitespace-nowrap tracking-[0.300px]">/elektricke obvody/schemata/klavesnice)</span>
      </div>

      <div className="flex h-[38px] shrink-0 items-center border-b border-[#b9b9b9] bg-gradient-to-b from-[#f7f7f7] to-[#dadada] pl-[5px]">
        {topGroups.map((g, i) => (
          <React.Fragment key={i}>
            {i > 0 && <div className="flex w-0.5 justify-center"><div className="h-6 w-px bg-[#c2c2c2]" /></div>}
            {g.map((n, j) => <div key={j} className="flex w-[34px] justify-center">{n}</div>)}
          </React.Fragment>
        ))}
      </div>

      <div className="flex h-[693px] shrink-0">
        <Side items={leftIcons} cls="w-[36px] pt-[6px]" />
        <div className="flex w-[1367px] flex-col border-l-2 border-t-2 border-r border-l-[#9c9c9c] border-r-[#8a8a8a] border-t-[#777] bg-white pl-px pt-px">
          <div className="flex">
            <Schematic />
            <div className="relative flex w-4 justify-center bg-gradient-to-r from-[#ededed] to-white pt-[121px]">
              <div className="h-[216px] w-2 rounded-full bg-[#c1c1c1]" />
            </div>
          </div>
          <div className="flex h-4 items-center bg-gradient-to-b from-[#ededed] to-white pl-[467px]">
            <div className="h-2 w-[617px] rounded-full bg-[#c1c1c1]" />
          </div>
        </div>
        <Side items={rightIcons} cls="w-[37px] border-l border-white pt-[6px]" />
      </div>

      <div className="h-[29px] shrink-0 border-t border-[#8f8f8f] bg-[#ececec]" />
      <div className="flex h-[18px] shrink-0 items-center whitespace-nowrap border-t-2 border-[#bdbdbd] bg-[#ececec] pb-[3px] pl-[5px] text-[11px] tracking-[0.230px] text-black">
        <span className="w-[62px] overflow-hidden">File /Users/_</span>
        <div className="h-4 w-[94px] border-2 border-[#dedede] bg-[#e7e7e7]" />
        <span className="w-[554px]">/elektricke obvody/schemata/klavesnice/$klavesnice_ergo.sch saved</span>
        <span className="w-[62px]">Z 8</span>
        <span className="w-[55px] tracking-[0.550px]">X 317.80</span>
        <span className="w-[129px] tracking-[0.550px]">Y 111.15</span>
        <span className="w-[62px] tracking-[0.550px]">dx 317.80</span>
        <span className="w-[61px] tracking-[0.550px]">dy 111.15</span>
        <span className="w-[164px] tracking-[0.550px]">d 336.68</span>
        <span className="w-[44px]">mm</span>
        <span>Add wire</span>
      </div>
      <Desktop />
    </div>
  );
}
